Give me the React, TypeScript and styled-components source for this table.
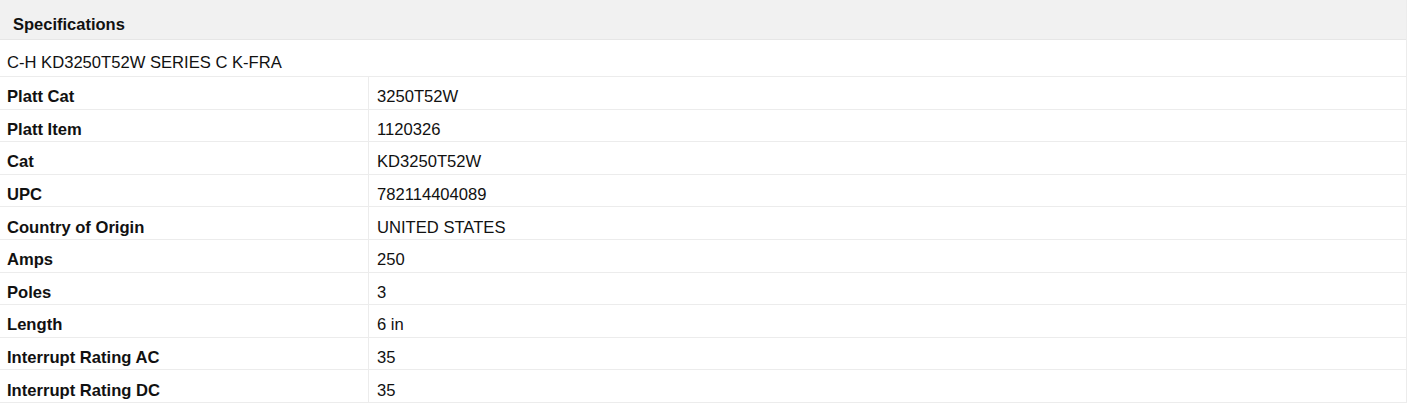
import React from 'react';
import styled, { createGlobalStyle } from 'styled-components';

const GlobalStyle = createGlobalStyle`
  body {
    margin: 0;
    background: #fff;
    font-family: "Liberation Sans", Arial, sans-serif;
    color: #111;
  }
`;

const Table = styled.div`
  width: 1406px;
  border-right: 1px solid #ececec;
`;

const Header = styled.div`
  height: 40px;
  box-sizing: border-box;
  padding: 10px 0 0 13px;
  background: #f1f1f1;
  border-bottom: 1px solid #e6e6e6;
  display: flex;
  align-items: center;
  font-size: 16.5px;
  font-weight: bold;
`;

const Title = styled.div`
  height: 37px;
  box-sizing: border-box;
  padding: 10px 0 0 7px;
  border-bottom: 1px solid #ececec;
  display: flex;
  align-items: center;
  font-size: 16.6px;
`;

const Row = styled.div`
  display: grid;
  grid-template-columns: 369px 1fr;
  height: 32.6px;
  box-sizing: border-box;
  border-bottom: 1px solid #ececec;
  font-size: 16.6px;
`;

const Label = styled.div`
  display: flex;
  align-items: center;
  padding: 9px 0 0 7px;
  font-weight: bold;
  border-right: 1px solid #ececec;
`;

const Value = styled.div`
  display: flex;
  align-items: center;
  padding: 9px 0 0 8px;
`;

const specs: [string, string][] = [
  ['Platt Cat', '3250T52W'],
  ['Platt Item', '1120326'],
  ['Cat', 'KD3250T52W'],
  ['UPC', '782114404089'],
  ['Country of Origin', 'UNITED STATES'],
  ['Amps', '250'],
  ['Poles', '3'],
  ['Length', '6 in'],
  ['Interrupt Rating AC', '35'],
  ['Interrupt Rating DC', '35'],
];

export default function App() {
  return (
    <>
      <GlobalStyle />
      <Table>
        <Header>Specifications</Header>
        <Title>C-H KD3250T52W SERIES C K-FRA</Title>
        {specs.map(([k, v]) => (
          <Row key={k}>
            <Label>{k}</Label>
            <Value>{v}</Value>
          </Row>
        ))}
      </Table>
    </>
  );
}
